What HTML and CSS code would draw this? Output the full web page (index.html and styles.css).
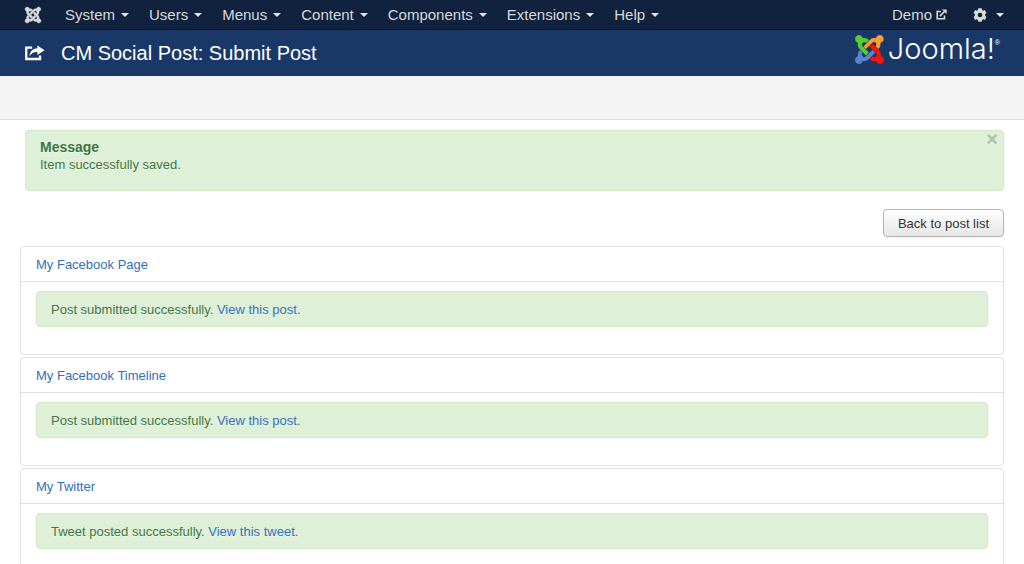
FILE: index.html
```html
<!DOCTYPE html>
<html lang="en">
<head>
<meta charset="utf-8">
<meta name="viewport" content="width=device-width, initial-scale=1">
<title>CM Social Post: Submit Post</title>
<link rel="stylesheet" href="styles.css">
</head>
<body>
<nav class="topbar" aria-label="Main">
  <a class="brand" href="#" aria-label="Control panel">
    <svg class="brand-icon" viewBox="0 0 24 24" aria-hidden="true">
      <path d="M16.719 14.759L14.22 17.26l-2.37 2.37-.462.466c-1.368 1.365-3.297 1.83-5.047 1.397-.327 1.424-1.604 2.49-3.13 2.49C1.438 23.983 0 22.547 0 20.772c0-1.518 1.055-2.789 2.469-3.123-.446-1.76.016-3.705 1.396-5.08l.179-.18 2.37 2.37-.184.181c-.769.779-.769 2.024 0 2.789.771.78 2.022.78 2.787 0l.465-.465 2.367-2.371 2.502-2.506z"/>
      <path d="M17.643 21.411c-1.822.563-3.885.12-5.328-1.318l-.18-.185 2.365-2.369.18.184c.771.768 2.018.768 2.787 0 .765-.765.769-2.01-.004-2.781l-.466-.465-2.365-2.37-2.502-2.503 2.37-2.369 2.499 2.505 2.367 2.37.464.464c1.365 1.36 1.846 3.278 1.411 5.021 1.56.224 2.759 1.56 2.759 3.18 0 1.784-1.439 3.21-3.209 3.21-1.545 0-2.851-1.096-3.135-2.565z"/>
      <path d="M6.975 9.461l2.508-2.505 2.37-2.369.462-.461c1.365-1.366 3.3-1.836 5.04-1.396C17.584 1.176 18.9 0 20.5 0c1.768 0 3.215 1.439 3.215 3.211 0 1.612-1.199 2.943-2.76 3.18.434 1.764-.045 3.689-1.411 5.055l-.18.181-2.355-2.366.18-.181c.766-.765.766-2.025 0-2.79-.765-.765-2.01-.765-2.775 0l-.465.466-2.37 2.37-2.498 2.5z"/>
      <path d="M.061 3.209c0-1.77 1.427-3.206 3.199-3.206 1.6 0 2.918 1.16 3.162 2.684 1.714-.39 3.583.091 4.924 1.415l.177.184-2.368 2.366-.18-.181c-.77-.765-2.025-.765-2.79 0-.767.766-.767 2.011 0 2.776l.465.465 2.369 2.37 2.505 2.504-2.37 2.37-2.505-2.505-2.37-2.369-.466-.465c-1.426-1.425-1.875-3.449-1.35-5.25C1.027 6.106.061 4.771.061 3.209z"/>
    </svg>
  </a>
  <ul class="menu">
    <li><a class="menu-link" href="#">System<span class="caret"></span></a></li>
    <li><a class="menu-link" href="#">Users<span class="caret"></span></a></li>
    <li><a class="menu-link" href="#">Menus<span class="caret"></span></a></li>
    <li><a class="menu-link" href="#">Content<span class="caret"></span></a></li>
    <li><a class="menu-link" href="#">Components<span class="caret"></span></a></li>
    <li><a class="menu-link" href="#">Extensions<span class="caret"></span></a></li>
    <li><a class="menu-link" href="#">Help<span class="caret"></span></a></li>
  </ul>
  <div class="tools">
    <a class="site-link" href="#">Demo
      <svg class="out-icon" viewBox="0 0 11 11" aria-hidden="true">
        <path d="M5 2.500H1.200V9.800H8.500V6.500" fill="none" stroke="currentColor" stroke-width="1.600"/>
        <path d="M3.800 7.200L8.500 2.500" fill="none" stroke="currentColor" stroke-width="1.700"/>
        <path d="M6 .4H10.700V5.100Z" fill="currentColor"/>
      </svg>
    </a>
    <a class="user-link" href="#" aria-label="User menu">
      <svg class="gear-icon" viewBox="0 0 14 14" aria-hidden="true">
        <path fill="currentColor" fill-rule="evenodd" d="M5.300.3h3.400l.4 1.800 1 .6 1.800-.6 1.600 2.800-1.300 1.200v1.800l1.300 1.200-1.600 2.800-1.800-.6-1 .6-.4 1.800H5.300l-.4-1.800-1-.6-1.800.6L.5 9.100l1.300-1.200V6.100L.5 4.900l1.600-2.800 1.800.6 1-.6zM7 4.700a2.300 2.300 0 1 0 0 4.600a2.300 2.300 0 1 0 0-4.600z"/>
      </svg>
      <span class="caret"></span>
    </a>
  </div>
</nav>

<header class="header">
  <svg class="share-icon" viewBox="0 0 21 16" aria-hidden="true">
    <path d="M7.500 2.300H1.300V14.300H15.800V10.500" fill="none" stroke="currentColor" stroke-width="2.400"/>
    <path d="M13 0L20.500 5L13 10V7C9.500 6.800 7 8 4.700 11.300C5 6.500 8 3.200 13 3Z" fill="currentColor"/>
  </svg>
  <h1 class="page-title">CM Social Post: Submit Post</h1>
  <div class="logo">
    <svg class="logo-mark" viewBox="0 0 24 24" aria-hidden="true">
      <path fill="#5785cf" d="M16.719 14.759L14.22 17.26l-2.37 2.37-.462.466c-1.368 1.365-3.297 1.83-5.047 1.397-.327 1.424-1.604 2.49-3.13 2.49C1.438 23.983 0 22.547 0 20.772c0-1.518 1.055-2.789 2.469-3.123-.446-1.76.016-3.705 1.396-5.08l.179-.18 2.37 2.37-.184.181c-.769.779-.769 2.024 0 2.789.771.78 2.022.78 2.787 0l.465-.465 2.367-2.371 2.502-2.506z"/>
      <path fill="#f9150b" d="M17.643 21.411c-1.822.563-3.885.12-5.328-1.318l-.18-.185 2.365-2.369.18.184c.771.768 2.018.768 2.787 0 .765-.765.769-2.01-.004-2.781l-.466-.465-2.365-2.37-2.502-2.503 2.37-2.369 2.499 2.505 2.367 2.370.464.464c1.365 1.36 1.846 3.278 1.411 5.021 1.56.224 2.759 1.56 2.759 3.18 0 1.784-1.439 3.21-3.209 3.21-1.545 0-2.851-1.096-3.135-2.565z"/>
      <path fill="#fba02c" d="M6.975 9.461l2.508-2.505 2.37-2.369.462-.461c1.365-1.366 3.3-1.836 5.04-1.396C17.584 1.176 18.9 0 20.5 0c1.768 0 3.215 1.439 3.215 3.211 0 1.612-1.199 2.943-2.76 3.18.434 1.764-.045 3.689-1.411 5.055l-.18.181-2.355-2.366.18-.181c.766-.765.766-2.025 0-2.79-.765-.765-2.01-.765-2.775 0l-.465.466-2.37 2.37-2.498 2.5z"/>
      <path fill="#4fd02f" d="M.061 3.209c0-1.77 1.427-3.206 3.199-3.206 1.6 0 2.918 1.16 3.162 2.684 1.714-.39 3.583.091 4.924 1.415l.177.184-2.368 2.366-.18-.181c-.77-.765-2.025-.765-2.79 0-.767.766-.767 2.011 0 2.776l.465.465 2.369 2.37 2.505 2.504-2.37 2.37-2.505-2.505-2.37-2.369-.466-.465c-1.426-1.425-1.875-3.449-1.35-5.25C1.027 6.106.061 4.771.061 3.209z"/>
      <g stroke-width="4" stroke-linecap="round">
        <path stroke="#4fd02f" d="M3.200 3.200L5 5"/>
        <path stroke="#fba02c" d="M20.500 3.200L18.700 5"/>
        <path stroke="#5785cf" d="M3.200 20.800L5 19"/>
        <path stroke="#f9150b" d="M20.800 20.800L19 19"/>
      </g>
    </svg>
    <span class="logo-text">Joomla!</span><span class="logo-reg">®</span>
  </div>
</header>

<div class="subhead"></div>

<main class="content">
  <div class="alert message" role="status">
    <button class="close" type="button" aria-label="Close">×</button>
    <h2 class="message-title">Message</h2>
    <p class="message-text">Item successfully saved.</p>
  </div>

  <div class="actions">
    <button class="btn" type="button">Back to post list</button>
  </div>

  <section class="panel">
    <h3 class="panel-head"><a href="#">My Facebook Page</a></h3>
    <div class="panel-body">
      <p class="alert result">Post submitted successfully. <a href="#">View this post</a>.</p>
    </div>
  </section>
  <section class="panel">
    <h3 class="panel-head"><a href="#">My Facebook Timeline</a></h3>
    <div class="panel-body">
      <p class="alert result">Post submitted successfully. <a href="#">View this post</a>.</p>
    </div>
  </section>
  <section class="panel">
    <h3 class="panel-head"><a href="#">My Twitter</a></h3>
    <div class="panel-body">
      <p class="alert result">Tweet posted successfully. <a href="#">View this tweet</a>.</p>
    </div>
  </section>
</main>
</body>
</html>
```
FILE: styles.css
```css
* {
  box-sizing: border-box;
}

html {
  scrollbar-width: none;
}

body {
  margin: 0;
  background: #fff;
  color: #333;
  font-family: "Liberation Sans", Arial, sans-serif;
  font-size: 13px;
  line-height: 18px;
}

h1, h2, h3, p, ul {
  margin: 0;
  padding: 0;
}

a {
  color: #3071b5;
  text-decoration: none;
}

.topbar {
  display: flex;
  align-items: center;
  height: 30px;
  padding: 0 20px 0 25px;
  background: #10223e;
  border-bottom: 1px solid #0b1629;
  font-size: 15px;
}

.topbar a {
  color: #d9d9d9;
}

.brand,
.brand-icon {
  display: block;
  width: 16px;
  height: 16px;
}

.brand {
  margin-right: 14px;
}

.brand-icon {
  fill: #d9d9d9;
  stroke: #d9d9d9;
  stroke-width: 0.6;
  overflow: visible;
}

.menu {
  display: flex;
  list-style: none;
}

.menu-link {
  display: flex;
  align-items: center;
  padding: 0 10px;
}

.caret {
  width: 8px;
  margin-left: 6px;
  border: 4px solid transparent;
  border-top-color: #e6e6e6;
  border-bottom: 0;
}

.tools {
  display: flex;
  align-items: center;
  gap: 26px;
  margin-left: auto;
}

.site-link,
.user-link {
  display: flex;
  align-items: center;
}

.site-link {
  gap: 4px;
}

.out-icon {
  width: 11px;
  height: 11px;
}

.gear-icon {
  width: 14px;
  height: 14px;
}

.user-link .caret {
  margin-left: 9px;
}

.header {
  display: flex;
  align-items: center;
  height: 46px;
  padding: 0 24px 0 25px;
  background: #1a3867;
  color: #fff;
}

.share-icon {
  width: 20px;
  height: 16px;
  margin-right: 16px;
}

.page-title {
  font-size: 20px;
  font-weight: 400;
  line-height: 30px;
}

.logo {
  display: flex;
  align-items: flex-start;
  height: 36px;
  margin-left: auto;
}

.logo-mark {
  width: 29px;
  height: 29px;
  margin-right: 4px;
}

.logo-text {
  font-family: Inter, sans-serif;
  font-size: 29px;
  font-weight: 300;
  line-height: 28px;
}

.logo-reg {
  font-size: 7px;
  line-height: 16px;
}

.subhead {
  height: 44px;
  background: #f4f4f4;
  border-bottom: 1px solid #e0e0e0;
}

.content {
  padding: 10px 20px;
}

.alert {
  background: #dff0d8;
  border: 1px solid #d1e8c3;
  border-radius: 4px;
  color: #3c763d;
  text-shadow: 0 1px 0 rgba(255, 255, 255, 0.5);
}

.message {
  position: relative;
  margin-left: 5px;
  padding: 7px 14px 16px;
}

.message-title {
  font-size: 14px;
  line-height: 18px;
}

.close {
  position: absolute;
  top: 0;
  right: 5px;
  padding: 0;
  border: 0;
  background: none;
  color: #000;
  font-family: inherit;
  font-size: 20px;
  font-weight: 700;
  line-height: 16px;
  opacity: 0.2;
}

.actions {
  display: flex;
  justify-content: flex-end;
  padding: 18px 0 9px;
}

.btn {
  padding: 5px 14px 3px;
  border: 1px solid #b3b3b3;
  border-radius: 4px;
  background: linear-gradient(#fff, #e6e6e6);
  box-shadow: 0 1px 2px rgba(0, 0, 0, 0.05);
  color: #333;
  font-family: inherit;
  font-size: 13px;
  line-height: 18px;
}

.panel {
  margin-bottom: 2px;
  border: 1px solid #e2e2e2;
  border-radius: 4px;
}

.panel-head {
  padding: 9px 15px 7px;
  font-size: 13px;
  font-weight: 400;
}

.panel-body {
  padding: 9px 15px 27px;
  border-top: 1px solid #e2e2e2;
}

.result {
  padding: 9px 14px 7px;
}
```
